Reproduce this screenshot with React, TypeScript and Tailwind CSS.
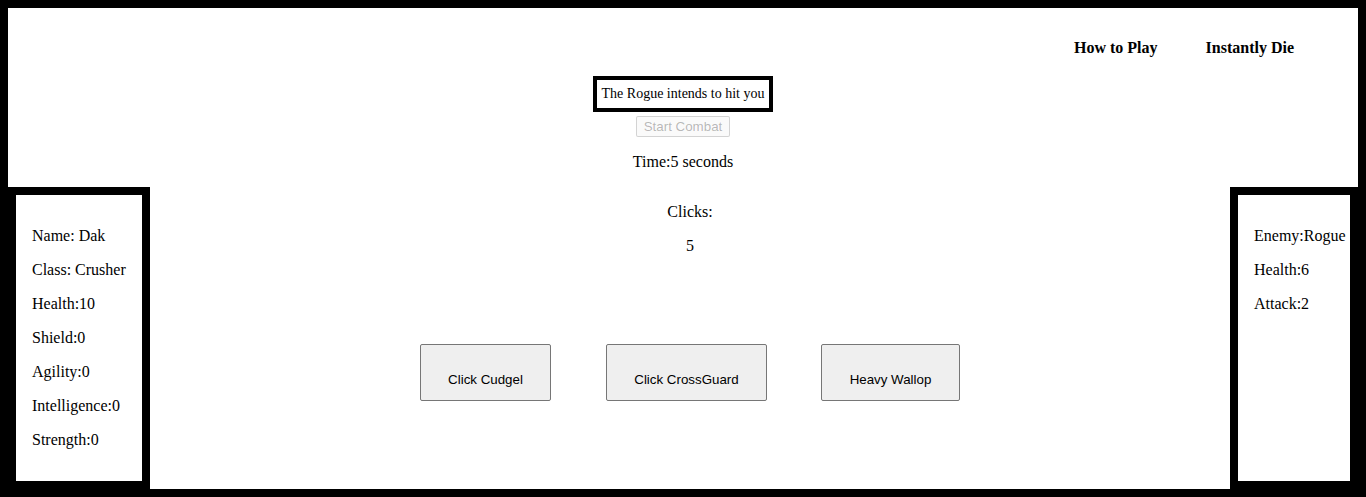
import React from "react";

const serif = "font-['Liberation_Serif','Times_New_Roman',serif]";
const sans = "font-['Liberation_Sans',Arial,sans-serif]";

export default function App() {
  return (
    <div className={`h-[497px] w-[1366px] border-8 border-black bg-white text-black ${serif} text-[16px] leading-[18px]`}>
      {/* Header */}
      <div className="flex h-[179px] flex-col items-center">
        <nav className="flex w-full justify-end gap-[48px] pr-[64px] pt-[31px] font-bold">
          <span>How to Play</span>
          <span>Instantly Die</span>
        </nav>
        <div className="mt-[19px] border-4 border-black px-[5px] py-[6px] text-[14px] leading-[16px]">
          The Rogue intends to hit you
        </div>
        <button
          disabled
          className={`mt-[4px] rounded-[2px] border border-[rgba(118,118,118,0.3)] bg-[rgba(239,239,239,0.3)] px-[7px] py-[2px] text-[13.333px] leading-[15px] text-[rgba(16,16,16,0.3)] ${sans}`}
        >
          Start Combat
        </button>
        <p className="mt-[16px]">Time:5 seconds</p>
      </div>

      {/* Body row */}
      <div className="flex h-[302px]">
        <aside className="flex w-[142px] shrink-0 flex-col gap-[16px] border-8 border-black p-[16px] pt-[32px]">
          <p>Name: Dak</p>
          <p>Class: Crusher</p>
          <p>Health:10</p>
          <p>Shield:0</p>
          <p>Agility:0</p>
          <p>Intelligence:0</p>
          <p>Strength:0</p>
        </aside>

        <main className="flex flex-1 flex-col items-center pt-[16px]">
          <p>Clicks:</p>
          <p className="mt-[16px]">5</p>
          <div className={`mt-[89px] flex ${sans} text-[13.333px]`}>
            <button className="flex h-[57px] w-[131px] items-start justify-center rounded-[2px] border border-[#767676] bg-[#efefef] pt-[27px] leading-[15px] text-black whitespace-nowrap">
              Click Cudgel
            </button>
            <button className="ml-[55px] flex h-[57px] w-[161px] items-start justify-center rounded-[2px] border border-[#767676] bg-[#efefef] pt-[27px] leading-[15px] text-black whitespace-nowrap">
              Click CrossGuard
            </button>
            <button className="ml-[54px] flex h-[57px] w-[139px] items-start justify-center rounded-[2px] border border-[#767676] bg-[#efefef] pt-[27px] leading-[15px] text-black whitespace-nowrap">
              Heavy Wallop
            </button>
          </div>
        </main>

        <aside className="flex w-[128px] shrink-0 flex-col gap-[16px] border-8 border-black p-[16px] pt-[32px] whitespace-nowrap">
          <p>Enemy:Rogue</p>
          <p>Health:6</p>
          <p>Attack:2</p>
        </aside>
      </div>
    </div>
  );
}
